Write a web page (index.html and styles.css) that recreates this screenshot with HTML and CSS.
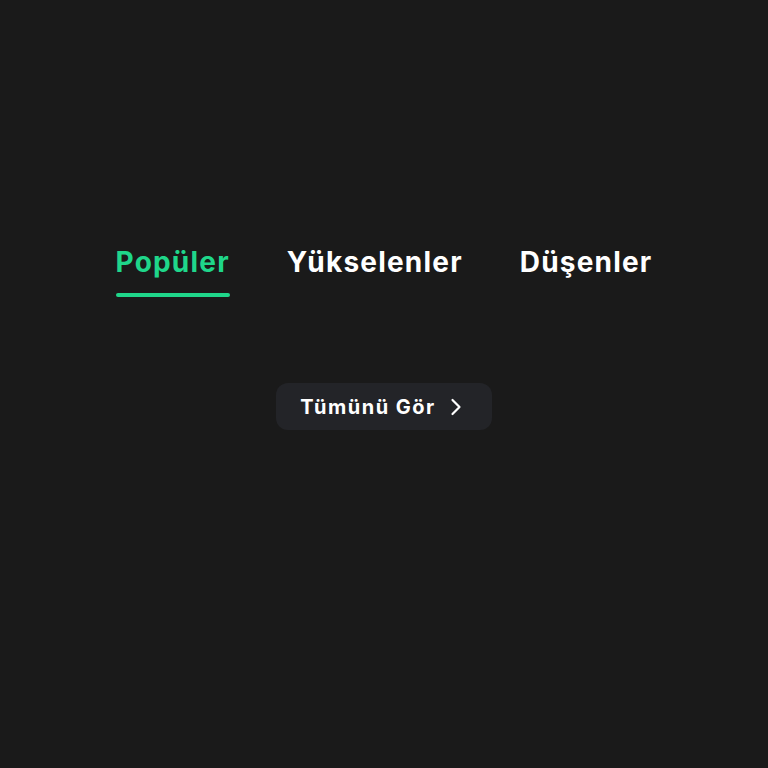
FILE: index.html
```html
<!DOCTYPE html>
<html lang="tr">
<head>
    <meta charset="UTF-8">
    <meta name="viewport" content="width=device-width, initial-scale=1.0">
    <link rel="stylesheet" href="styles.css">
</head>
<body>
    <div class="panel">
        <!-- tab bar -->
        <div class="tabs">
            <div class="tab active"><span>Popüler</span><i class="bar"></i></div>
            <div class="tab"><span>Yükselenler</span><i class="bar"></i></div>
            <div class="tab"><span>Düşenler</span><i class="bar"></i></div>
        </div>
        <button class="more">
            <span>Tümünü Gör</span>
            <svg width="12" height="18" viewBox="0 0 12 18" fill="none" stroke="currentColor" stroke-width="2.2" stroke-linecap="round" stroke-linejoin="round"><path d="M2.5 2l7 7-7 7"/></svg>
        </button>
    </div>
</body>
</html>
```

FILE: styles.css
```css
* {
    box-sizing: border-box;
    margin: 0;
    padding: 0;
}

body {
    background-color: #1a1a1a;
    font-family: "Inter", "Noto Sans", sans-serif;
    color: #fff;
    height: 768px;
}

.panel {
    display: flex;
    flex-direction: column;
    align-items: center;
    padding-top: 241px;
}

.tabs {
    display: flex;
    gap: 57px;
}

.tab {
    display: flex;
    flex-direction: column;
    align-items: stretch;
    font-size: 28px;
    font-weight: 700;
    line-height: 42px;
    letter-spacing: 1.2px;
}

.tab .bar {
    display: block;
    height: 4px;
    margin-top: 10px;
    border-radius: 2px;
}

.tab.active {
    color: #1fd68a;
}

.tab.active .bar {
    background-color: #1fd68a;
}

.more {
    margin-top: 86px;
    height: 47px;
    padding: 0 30px 0 24px;
    display: flex;
    align-items: center;
    gap: 14px;
    border: none;
    border-radius: 12px;
    background-color: #232428;
    color: #fff;
    font-family: inherit;
    font-size: 20px;
    font-weight: 700;
    letter-spacing: 1.5px;
}
```
